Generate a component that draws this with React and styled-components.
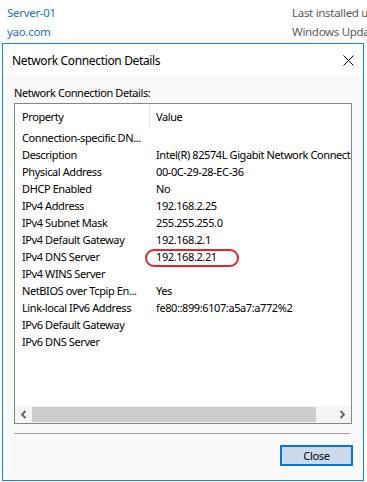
import React from "react";
import styled, { createGlobalStyle } from "styled-components";

const Global = createGlobalStyle`
  html, body { margin: 0; padding: 0; background: #ffffff; }
  body { width: 367px; height: 482px; overflow: hidden; font-family: "Noto Sans", "Segoe UI", sans-serif; }
`;

const Page = styled.div`
  width: 367px;
  height: 482px;
  overflow: hidden;
  background: #fff;
`;

const TopInfo = styled.div`
  height: 43px;
  display: flex;
  justify-content: space-between;
  overflow: hidden;
`;

const InfoCol = styled.div`
  display: flex;
  flex-direction: column;
  padding-top: 3px;
  padding-left: ${(p) => p.$left || 0}px;
  width: ${(p) => p.$width}px;
  white-space: nowrap;
  overflow: hidden;
`;

const InfoText = styled.div`
  font-size: 11.5px;
  line-height: 19px;
  letter-spacing: -0.3px;
  color: ${(p) => (p.$link ? "#1f72b8" : "#5b5b5b")};
`;

const Window = styled.div`
  margin-left: 2px;
  width: 362px;
  height: 438px;
  box-sizing: border-box;
  border: 1px solid #1a86d8;
  background: #f9f9f9;
  display: flex;
  flex-direction: column;
`;

const TitleBar = styled.div`
  height: 32px;
  background: #ffffff;
  display: flex;
  align-items: center;
  justify-content: space-between;
  padding: 0 9px 0 9px;
`;

const Title = styled.div`
  font-size: 12px;
  color: #000;
  letter-spacing: -0.35px;
`;

const CloseX = styled.svg`
  width: 11px;
  height: 11px;
  display: block;
`;

const Body = styled.div`
  flex: 1;
  display: flex;
  flex-direction: column;
  padding: 9px 11px 0 11px;
`;

const Label = styled.div`
  font-size: 11px;
  line-height: 16px;
  color: #000;
  letter-spacing: -0.4px;
  margin-bottom: 2px;
`;

const ListBox = styled.div`
  width: 338px;
  height: 321px;
  box-sizing: border-box;
  border: 1px solid #828790;
  background: #fff;
  display: flex;
  flex-direction: column;
  overflow: hidden;
`;

const Header = styled.div`
  display: flex;
  height: 24px;
  margin-bottom: 1px;
  flex-shrink: 0;
`;

const HeadCell = styled.div`
  width: ${(p) => (p.$first ? "134px" : "auto")};
  flex: ${(p) => (p.$first ? "none" : "1")};
  box-sizing: border-box;
  display: flex;
  align-items: center;
  padding-left: ${(p) => (p.$first ? 7 : 6)}px;
  font-size: 11px;
  color: #000;
  letter-spacing: -0.4px;
  border-left: ${(p) => (p.$first ? "none" : "1px solid #e5e5e5")};
`;

const Grid = styled.div`
  flex: 1;
  display: grid;
  grid-template-columns: 134px 1fr;
  grid-auto-rows: 17px;
  align-content: start;
  overflow: hidden;
`;

const Cell = styled.div`
  font-size: 11px;
  line-height: 17px;
  color: #000;
  white-space: nowrap;
  overflow: ${(p) => (p.$value ? "visible" : "hidden")};
  text-overflow: ${(p) => (p.$value ? "clip" : "ellipsis")};
  padding-left: 7px;
  letter-spacing: -0.4px;
  min-width: 0;
`;

const Marked = styled.span`
  position: relative;
  display: inline-block;
  height: 17px;
  line-height: 17px;
  &::after {
    content: "";
    position: absolute;
    left: -11px;
    top: 1px;
    width: 94px;
    height: 18px;
    box-sizing: border-box;
    border: 2px solid #e3222d;
    border-radius: 10px;
  }
`;

const HScroll = styled.div`
  height: 17px;
  flex-shrink: 0;
  background: #f4f4f4;
  display: flex;
  align-items: center;
`;

const Arrow = styled.div`
  width: 17px;
  height: 17px;
  display: flex;
  align-items: center;
  justify-content: center;
`;

const Thumb = styled.div`
  height: 15px;
  width: 284px;
  background: #cdcdcd;
`;

const Track = styled.div`
  flex: 1;
  display: flex;
  align-items: center;
`;

const Separator = styled.div`
  width: 336px;
  height: 1px;
  background: #a0a0a0;
  margin-top: 9px;
`;

const Footer = styled.div`
  display: flex;
  justify-content: flex-end;
  margin-top: 11px;
  width: 339px;
`;

const Button = styled.button`
  width: 73px;
  height: 21px;
  box-sizing: border-box;
  border: 2px solid #0078d7;
  background: #ccdaea;
  font-family: "Noto Sans", "Segoe UI", sans-serif;
  font-size: 11px;
  letter-spacing: -0.3px;
  color: #000;
  padding: 0;
  line-height: 16px;
`;

const rows = [
  ["Connection-specific DN...", ""],
  ["Description", "Intel(R) 82574L Gigabit Network Connection"],
  ["Physical Address", "00-0C-29-28-EC-36"],
  ["DHCP Enabled", "No"],
  ["IPv4 Address", "192.168.2.25"],
  ["IPv4 Subnet Mask", "255.255.255.0"],
  ["IPv4 Default Gateway", "192.168.2.1"],
  ["IPv4 DNS Server", "192.168.2.21", true],
  ["IPv4 WINS Server", ""],
  ["NetBIOS over Tcpip En...", "Yes"],
  ["Link-local IPv6 Address", "fe80::899:6107:a5a7:a772%2"],
  ["IPv6 Default Gateway", ""],
  ["IPv6 DNS Server", ""],
];

const Chevron = ({ dir }) => (
  <svg width="7" height="9" viewBox="0 0 7 9">
    <path
      d={dir === "left" ? "M5.5 1 L2 4.5 L5.5 8" : "M1.5 1 L5 4.5 L1.5 8"}
      fill="none"
      stroke="#606060"
      strokeWidth="1.8"
    />
  </svg>
);

export default function App() {
  return (
    <Page>
      <Global />
      <TopInfo>
        <InfoCol $left={7} $width={120}>
          <InfoText $link>Server-01</InfoText>
          <InfoText $link>yao.com</InfoText>
        </InfoCol>
        <InfoCol $width={75}>
          <InfoText>Last installed updates</InfoText>
          <InfoText>Windows Update</InfoText>
        </InfoCol>
      </TopInfo>
      <Window>
        <TitleBar>
          <Title>Network Connection Details</Title>
          <CloseX viewBox="0 0 11 11">
            <path d="M0.5 0.5 L10.5 10.5 M10.5 0.5 L0.5 10.5" stroke="#000" strokeWidth="1" />
          </CloseX>
        </TitleBar>
        <Body>
          <Label>Network Connection Details:</Label>
          <ListBox>
            <Header>
              <HeadCell $first>Property</HeadCell>
              <HeadCell>Value</HeadCell>
            </Header>
            <Grid>
              {rows.map(([k, v, mark]) => (
                <React.Fragment key={k}>
                  <Cell>{k}</Cell>
                  <Cell $value>{mark ? <Marked>{v}</Marked> : v}</Cell>
                </React.Fragment>
              ))}
            </Grid>
            <HScroll>
              <Arrow><Chevron dir="left" /></Arrow>
              <Track><Thumb /></Track>
              <Arrow><Chevron dir="right" /></Arrow>
            </HScroll>
          </ListBox>
          <Separator />
          <Footer>
            <Button>Close</Button>
          </Footer>
        </Body>
      </Window>
    </Page>
  );
}
